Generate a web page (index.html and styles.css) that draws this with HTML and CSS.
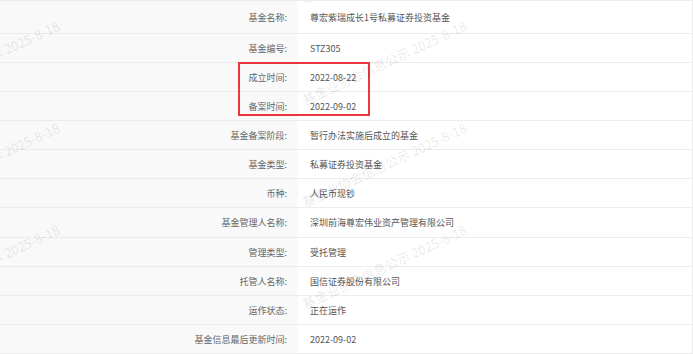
FILE: index.html
```html
<!DOCTYPE html>
<html lang="zh-CN">
<head>
<meta charset="utf-8">
<title>基金信息</title>
<link rel="stylesheet" href="styles.css">
</head>
<body>
<div class="info">
  <div class="row row-first"><div class="label">基金名称:</div><div class="value">尊宏紫瑞成长1号私募证券投资基金</div></div>
  <div class="row"><div class="label">基金编号:</div><div class="value">STZ305</div></div>
  <div class="row"><div class="label">成立时间:</div><div class="value">2022-08-22</div></div>
  <div class="row"><div class="label">备案时间:</div><div class="value">2022-09-02</div></div>
  <div class="row"><div class="label">基金备案阶段:</div><div class="value">暂行办法实施后成立的基金</div></div>
  <div class="row"><div class="label">基金类型:</div><div class="value">私募证券投资基金</div></div>
  <div class="row"><div class="label">币种:</div><div class="value">人民币现钞</div></div>
  <div class="row row-tall"><div class="label">基金管理人名称:</div><div class="value">深圳前海尊宏伟业资产管理有限公司</div></div>
  <div class="row"><div class="label">管理类型:</div><div class="value">受托管理</div></div>
  <div class="row"><div class="label">托管人名称:</div><div class="value">国信证券股份有限公司</div></div>
  <div class="row"><div class="label">运作状态:</div><div class="value">正在运作</div></div>
  <div class="row"><div class="label">基金信息最后更新时间:</div><div class="value">2022-09-02</div></div>

  <div class="highlight"></div>

  <div class="watermarks">
    <span class="wm wm-r1">基金业协会信息公示 2025-8-18</span>
    <span class="wm wm-r2">基金业协会信息公示 2025-8-18</span>
    <span class="wm wm-r3">基金业协会信息公示 2025-8-18</span>
    <span class="wm wm-r4">基金业协会信息公示 2025-8-18</span>
    <span class="wm wm-l2">基金业协会信息公示 2025-8-18</span>
    <span class="wm wm-l3">基金业协会信息公示 2025-8-18</span>
    <span class="wm wm-l4">基金业协会信息公示 2025-8-18</span>
  </div>
</div>
</body>
</html>
```
FILE: styles.css
```css
html, body {
  margin: 0;
  padding: 0;
  background: #ffffff;
}

body {
  font-family: "Noto Sans CJK SC", "Noto Sans", sans-serif;
  font-size: 9px;
  width: 693px;
  height: 354px;
  overflow: hidden;
}

.info {
  position: relative;
  width: 692px;
  border-top: 1px solid #ececec;
  border-right: 1px solid #ececec;
  overflow: hidden;
  height: 353px;
}

.row {
  display: grid;
  grid-template-columns: 298px 1fr;
  height: 28px;
  border-bottom: 1px solid #ececec;
}

.row-first {
  height: 32px;
}

.row-tall {
  height: 29px;
}

.label {
  background: #f9f9f9;
  color: #666666;
  text-align: right;
  padding-right: 11px;
  display: flex;
  align-items: center;
  justify-content: flex-end;
}

.value {
  color: #555555;
  padding-left: 12px;
  display: flex;
  align-items: center;
}

.highlight {
  position: absolute;
  left: 238px;
  top: 61px;
  width: 128px;
  height: 50px;
  border: 2px solid #e8383d;
}

.watermarks {
  position: absolute;
  inset: 0;
  pointer-events: none;
  overflow: hidden;
}

.wm {
  position: absolute;
  font-size: 13px;
  line-height: 13px;
  white-space: nowrap;
  color: rgba(0, 0, 0, 0.1);
  transform-origin: 0 50%;
  transform: rotate(-25deg);
}

.wm-r1 { left: 303px; top: -9px; }
.wm-r2 { left: 303px; top: 93px; }
.wm-r3 { left: 303px; top: 195px; }
.wm-r4 { left: 303px; top: 297px; }
.wm-l2 { left: -104px; top: 93px; }
.wm-l3 { left: -104px; top: 195px; }
.wm-l4 { left: -104px; top: 297px; }
```
